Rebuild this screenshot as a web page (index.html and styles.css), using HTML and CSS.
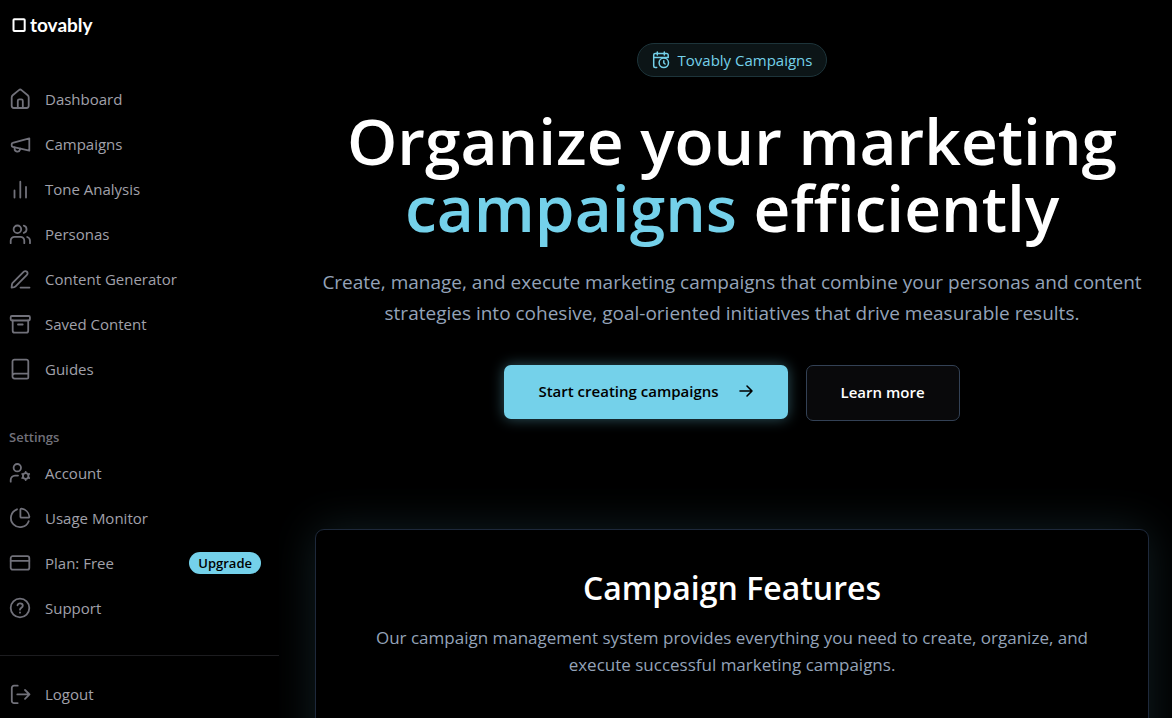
FILE: index.html
```html
<!DOCTYPE html>
<html lang="en">
<head>
<meta charset="utf-8">
<meta name="viewport" content="width=device-width, initial-scale=1">
<title>Tovably Campaigns</title>
<link rel="stylesheet" href="styles.css">
</head>
<body>
<div class="app">
  <aside class="sidebar">
    <a class="logo" href="#">
      <svg class="logo-mark" viewBox="0 0 14 14" aria-hidden="true"><rect x="1.5" y="1.2" width="11.2" height="11.8" rx="0.8"/></svg>
      <span>tovably</span>
    </a>
    <nav class="nav" aria-label="Main">
      <a class="nav-link" href="#"><svg class="icon" viewBox="0 0 24 24" aria-hidden="true"><path d="M3.7 10.4c0-.9.4-1.7 1-2.2l6.200-5.100a2 2 0 0 1 2.600 0l6.200 5.100c.6.5 1 1.300 1 2.200v8.400a2.200 2.200 0 0 1-2.200 2.200H5.900a2.200 2.200 0 0 1-2.200-2.200z"/><path d="M9.800 21v-7.200a1.500 1.500 0 0 1 1.500-1.500h2a1.500 1.500 0 0 1 1.500 1.500V21"/></svg>Dashboard</a>
      <a class="nav-link" href="#"><svg class="icon" viewBox="0 0 24 24" aria-hidden="true"><path d="M4.700 10.800 21.300 6.300v12.400L4.700 14.900a1.300 1.300 0 0 1-1-1.300v-1.500a1.300 1.300 0 0 1 1-1.300z"/><path d="M6.600 15.500v1.300a2.800 2.800 0 0 0 5.500.8l.2-.9"/></svg>Campaigns</a>
      <a class="nav-link" href="#"><svg class="icon" viewBox="0 0 24 24" aria-hidden="true"><path d="M6.500 13.500v7M12.300 4.700v15.800M18 10v10.500"/></svg>Tone Analysis</a>
      <a class="nav-link" href="#"><svg class="icon" viewBox="0 0 24 24" aria-hidden="true"><circle cx="9.400" cy="7.300" r="3.800"/><path d="M15.800 3.600a3.800 3.800 0 0 1 0 7.300M2.700 21.200v-2.500a3.900 3.900 0 0 1 3.900-3.900h5.800a3.900 3.900 0 0 1 3.900 3.900v2.500M19.200 15a3.900 3.900 0 0 1 2.800 3.700v2.500"/></svg>Personas</a>
      <a class="nav-link" href="#"><svg class="icon" viewBox="0 0 24 24" aria-hidden="true"><path d="m4.400 16.200 11.400-11.500a2.200 2.200 0 0 1 3.100 3.200L7.600 19.400c-.4.400-.9.600-1.400.7l-2.600.4.300-2.900c.1-.5.200-1 .5-1.400zM12.500 20.600h9"/></svg>Content Generator</a>
      <a class="nav-link" href="#"><svg class="icon" viewBox="0 0 24 24" aria-hidden="true"><rect x="2.700" y="4" width="19.200" height="4.500" rx="1.200"/><path d="M4.700 8.500v10.200a2 2 0 0 0 2 2h11.500a2 2 0 0 0 2-2V8.500M10 12.500h4.700"/></svg>Saved Content</a>
      <a class="nav-link" href="#"><svg class="icon" viewBox="0 0 24 24" aria-hidden="true"><path d="M20.300 16.700V4.600a2 2 0 0 0-2-2H6.500a2 2 0 0 0-2 2v14.900m15.800-2.800H6.700a2.200 2.200 0 0 0-2.200 2.400 2.200 2.200 0 0 0 2.200 2.600h12.400a1.200 1.200 0 0 0 1.200-1.200z"/></svg>Guides</a>
    </nav>
    <h2 class="nav-title">Settings</h2>
    <nav class="nav" aria-label="Settings">
      <a class="nav-link" href="#"><svg class="icon" viewBox="0 0 24 24" aria-hidden="true"><circle cx="9.300" cy="6.700" r="3.700"/><path d="M2.700 20.700v-1.800a4.300 4.300 0 0 1 4.300-4.300h3"/><circle cx="17.700" cy="15" r="2.800"/><path d="M17.700 11v1M17.700 18v1M14.200 13l.9.500M20.300 16.500l.9.500M14.200 17l.9-.5M20.300 13.500l.9-.5"/></svg>Account</a>
      <a class="nav-link" href="#"><svg class="icon" viewBox="0 0 24 24" aria-hidden="true"><path d="M9 3.300a9.200 9.200 0 1 0 11.700 11.900"/><path d="M12.400 3.700a1 1 0 0 1 1.100-1 9 9 0 0 1 7.800 7.800 1 1 0 0 1-1 1.200h-6.900a1 1 0 0 1-1-1z"/></svg>Usage Monitor</a>
      <div class="nav-row">
        <a class="nav-link" href="#"><svg class="icon" viewBox="0 0 24 24" aria-hidden="true"><rect x="2.700" y="5.200" width="18.600" height="13.500" rx="2"/><path d="M2.700 9.900h18.600"/></svg>Plan: Free</a>
        <button class="upgrade" type="button">Upgrade</button>
      </div>
      <a class="nav-link" href="#"><svg class="icon" viewBox="0 0 24 24" aria-hidden="true"><circle cx="12" cy="12" r="9.300"/><path d="M9.500 9.300c.3-1.300 1.300-2 2.600-2 1.500 0 2.700 1 2.700 2.400 0 2-2.800 2-2.800 4M12 16.300v.400"/></svg>Support</a>
    </nav>
    <div class="logout">
      <a class="nav-link" href="#"><svg class="icon" viewBox="0 0 24 24" aria-hidden="true"><path d="M9.700 3.700H6a2.200 2.200 0 0 0-2.200 2.200v13a2.200 2.200 0 0 0 2.200 2.200h3.700M9.300 12.400h12M17 8l4.500 4.400L17 16.800"/></svg>Logout</a>
    </div>
  </aside>
  <main class="main">
    <section class="hero">
      <p class="chip"><svg class="chip-icon" viewBox="0 0 18 18" aria-hidden="true"><path d="M5.300 1v3M12.300 1v3M1.700 6.500h14.600M4.700 16.500H3.200a1.500 1.500 0 0 1-1.500-1.500V4a1.500 1.500 0 0 1 1.500-1.500h11.500A1.500 1.500 0 0 1 16.200 4v2.500"/><circle cx="11.800" cy="11.800" r="4.700"/><path d="M11.800 9.800v2.200l1.300 1"/></svg>Tovably Campaigns</p>
      <h1 class="hero-title">Organize your marketing <span class="accent">campaigns</span> efficiently</h1>
      <p class="hero-text">Create, manage, and execute marketing campaigns that combine your personas and content strategies into cohesive, goal-oriented initiatives that drive measurable results.</p>
      <div class="actions">
        <button class="btn btn-primary" type="button">Start creating campaigns<svg class="arrow" viewBox="0 0 16 16" aria-hidden="true"><path d="M2 8h12M9 3l5 5-5 5"/></svg></button>
        <button class="btn btn-secondary" type="button">Learn more</button>
      </div>
    </section>
    <section class="features">
      <h2 class="features-title">Campaign Features</h2>
      <p class="features-text">Our campaign management system provides everything you need to create, organize, and execute successful marketing campaigns.</p>
    </section>
  </main>
</div>
</body>
</html>
```
FILE: styles.css
```css
* { box-sizing: border-box; }

body {
  margin: 0;
  background: #000;
  color: #fff;
  font-family: "Open Sans", "Noto Sans", sans-serif;
  font-size: 15px;
}

h1, h2, p { margin: 0; }
a { color: inherit; text-decoration: none; }
button { font: inherit; cursor: pointer; }

svg {
  fill: none;
  stroke: currentColor;
  stroke-linecap: round;
  stroke-linejoin: round;
  flex: none;
}

.app {
  display: flex;
  height: 100vh;
  overflow: hidden;
}

.sidebar {
  flex: none;
  width: 279px;
  color: #a1a1aa;
}

.logo {
  display: flex;
  align-items: center;
  gap: 4px;
  height: 50px;
  margin-bottom: 26px;
  padding-left: 12px;
  color: #fff;
  font-family: Lato, sans-serif;
  font-size: 19px;
  font-weight: 700;
  line-height: 24px;
}
.logo-mark { width: 14px; height: 14px; stroke-width: 2; }

.nav { display: flex; flex-direction: column; }
.nav-link {
  display: flex;
  align-items: center;
  gap: 13px;
  height: 45px;
  padding-left: 8px;
}
.icon { width: 24px; height: 24px; color: #71717a; stroke-width: 1.8; }

.nav-row {
  display: flex;
  align-items: center;
  justify-content: space-between;
  padding-right: 18px;
}
.upgrade {
  height: 22px;
  padding: 0 9px;
  border: 0;
  border-radius: 11px;
  background: #74d1ea;
  color: #000;
  font-size: 13px;
  font-weight: 600;
  line-height: 22px;
}

.nav-title {
  margin-top: 36px;
  margin-bottom: 3px;
  padding-left: 9px;
  color: #71717a;
  font-size: 13px;
  font-weight: 600;
  line-height: 20px;
}

.logout {
  margin-top: 25px;
  padding-top: 15px;
  border-top: 1px solid #1c1c1f;
}

.main {
  flex: 1;
  min-width: 0;
  padding: 43px 23px 0 36px;
  overflow: hidden;
}

.hero {
  display: flex;
  flex-direction: column;
  align-items: center;
  text-align: center;
}

.chip {
  display: flex;
  align-items: center;
  gap: 8px;
  height: 34px;
  padding: 0 14px;
  border: 1px solid #1d343a;
  border-radius: 17px;
  background: #0c1517;
  color: #74d1ea;
}
.chip-icon { width: 18px; height: 18px; stroke-width: 1.5; }

.hero-title {
  max-width: 800px;
  margin-top: 30px;
  font-size: 64px;
  font-weight: 600;
  line-height: 67px;
}
.accent { color: #74d1ea; }

.hero-text {
  max-width: 832px;
  margin-top: 26px;
  color: #94a3b8;
  font-size: 19px;
  line-height: 31px;
}

.actions {
  display: flex;
  align-items: flex-start;
  gap: 18px;
  margin-top: 36px;
}
.btn {
  display: flex;
  align-items: center;
  padding: 0 34px 2px;
  border-radius: 7px;
  font-size: 15px;
  font-weight: 600;
}
.btn-primary {
  gap: 19px;
  height: 54px;
  border: 0;
  background: #74d1ea;
  color: #000;
  box-shadow: 0 0 14px rgba(116, 209, 234, 0.4);
}
.btn-secondary {
  height: 56px;
  border: 1px solid #334155;
  background: #09090b;
  color: #fff;
}
.arrow { width: 16px; height: 16px; stroke-width: 1.6; }

.features {
  min-height: 400px;
  margin-top: 108px;
  padding: 35px 48px;
  border: 1px solid #1e293b;
  border-radius: 9px;
  background: #000;
  box-shadow: 0 0 45px rgba(116, 209, 234, 0.15);
  text-align: center;
}
.features-title {
  font-size: 32px;
  font-weight: 600;
  line-height: 45px;
}
.features-text {
  max-width: 736px;
  margin: 14px auto 0;
  color: #94a3b8;
  font-size: 17px;
  line-height: 27px;
}
```
